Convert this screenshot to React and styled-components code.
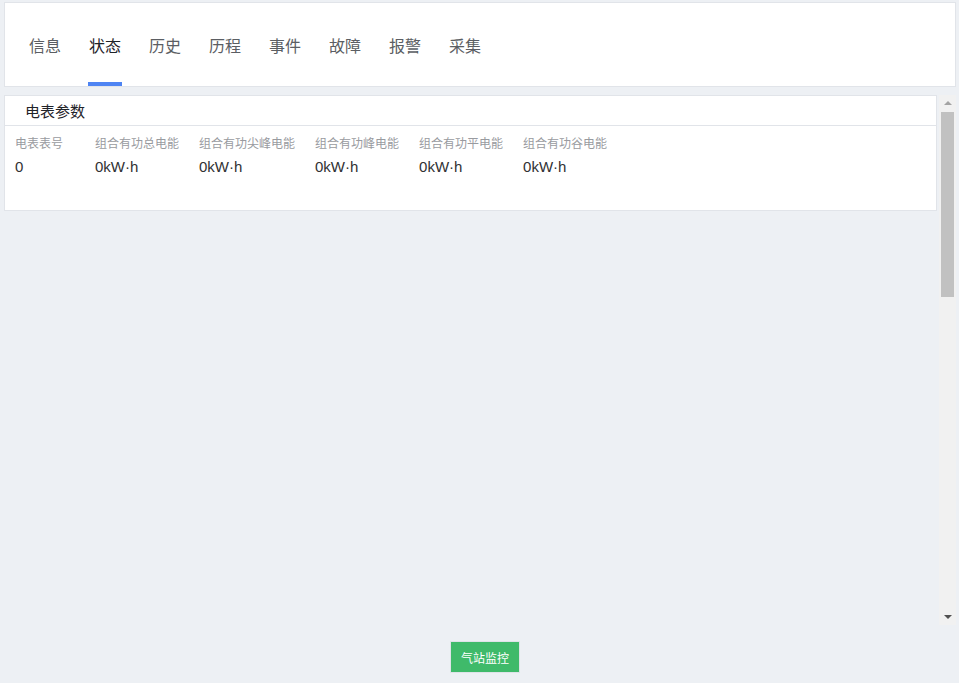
import styled, { createGlobalStyle } from 'styled-components'

const GlobalStyle = createGlobalStyle`
	html, body {
		margin: 0;
		padding: 0;
		background: #edf0f4;
		font-family: "Liberation Sans", "Noto Sans CJK SC", sans-serif;
	}
	* {
		box-sizing: border-box;
	}
`

const Page = styled.div`
	display: flex;
	flex-direction: column;
	height: 100vh;
	overflow: hidden;
`
const Header = styled.div`
	margin: 2px 3px 0 4px;
	height: 85px;
	flex-shrink: 0;
	background: #fff;
	border: 1px solid #e1e4e9;
	display: flex;
	align-items: stretch;
	padding-left: 10px;
`
const Tab = styled.div`
	margin: 0 13px;
	padding: 4px 1px 0;
	display: flex;
	align-items: center;
	font-size: 16px;
	color: ${(p) => (p.$active ? '#1f2329' : '#5b5e63')};
	border-bottom: 4px solid ${(p) => (p.$active ? '#4e84f3' : 'transparent')};
	cursor: pointer;
`
const Scroller = styled.div`
	flex: 1;
	min-height: 0;
	margin: 8px 3px 0 4px;
	display: flex;
`
const Content = styled.div`
	flex: 1;
	min-width: 0;
	overflow: hidden;
`
const ScrollBar = styled.div`
	width: 17px;
	flex-shrink: 0;
	display: flex;
	flex-direction: column;
	background: #f1f1f1;
`
const ArrowButton = styled.div`
	height: 17px;
	display: flex;
	align-items: center;
	justify-content: center;

	&::before {
		content: '';
		border-left: 4px solid transparent;
		border-right: 4px solid transparent;
		${(p) =>
			p.$down
				? 'border-top: 4px solid #505050; margin-top: 1px;'
				: 'border-bottom: 4px solid #a3a3a3; margin-bottom: 1px;'}
	}
`
const Track = styled.div`
	flex: 1;
	padding: 0 2px;
`
const Thumb = styled.div`
	height: 185px;
	background: #c1c1c1;
`
const Card = styled.div`
	margin-right: 2px;
	background: #fff;
	border: 1px solid #e1e4e9;
`
const CardTitle = styled.div`
	height: 30px;
	padding-left: 20px;
	display: flex;
	align-items: center;
	font-size: 15px;
	color: #1f2329;
	border-bottom: 1px solid #e1e4e9;
`
const CardBody = styled.div`
	display: flex;
	padding: 8px 10px 33px;
`
const Item = styled.div`
	min-width: 60px;
	margin-right: 20px;
`
const Label = styled.div`
	font-size: 12px;
	line-height: 20px;
	color: #999ba0;
	white-space: nowrap;
`
const Value = styled.div`
	margin-top: 3px;
	font-size: 15px;
	line-height: 20px;
	color: #303133;
	white-space: nowrap;
`
const Footer = styled.div`
	height: 58px;
	flex-shrink: 0;
	display: flex;
	justify-content: center;
	padding: 16px 0 0 11px;
`
const Button = styled.button`
	height: 32px;
	padding: 0 10px;
	background: #3fba6a;
	border: 1px solid #dfe3e8;
	color: #fff;
	font-size: 12px;
	font-family: "Liberation Sans", "Noto Sans CJK SC", sans-serif;
	cursor: pointer;
`

const tabs = ['信息', '状态', '历史', '历程', '事件', '故障', '报警', '采集']

const params = [
	{ label: '电表表号', value: '0' },
	{ label: '组合有功总电能', value: '0kW·h' },
	{ label: '组合有功尖峰电能', value: '0kW·h' },
	{ label: '组合有功峰电能', value: '0kW·h' },
	{ label: '组合有功平电能', value: '0kW·h' },
	{ label: '组合有功谷电能', value: '0kW·h' },
]

const App = () => {
	return (
		<Page>
			<GlobalStyle />
			<Header>
				{tabs.map((t) => (
					<Tab key={t} $active={t === '状态'}>
						{t}
					</Tab>
				))}
			</Header>
			<Scroller>
				<Content>
					<Card>
						<CardTitle>电表参数</CardTitle>
						<CardBody>
							{params.map((p) => (
								<Item key={p.label}>
									<Label>{p.label}</Label>
									<Value>{p.value}</Value>
								</Item>
							))}
						</CardBody>
					</Card>
				</Content>
				<ScrollBar>
					<ArrowButton />
					<Track>
						<Thumb />
					</Track>
					<ArrowButton $down />
				</ScrollBar>
			</Scroller>
			<Footer>
				<Button>气站监控</Button>
			</Footer>
		</Page>
	)
}

export default App
